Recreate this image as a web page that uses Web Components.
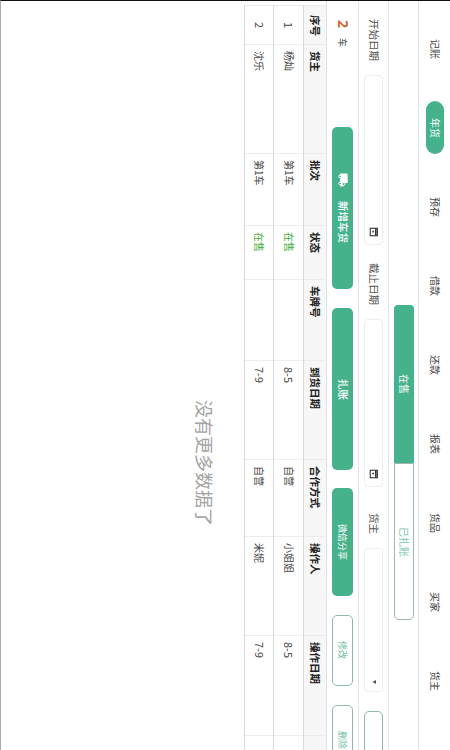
<!DOCTYPE html>
<html lang="zh-CN">
<head>
<meta charset="utf-8">
<title>年货</title>
<style>
  html { writing-mode: vertical-rl; text-orientation: sideways; background: #fff; overflow: hidden; }
  body {
    margin: 0; width: 450px; height: 750px; box-sizing: border-box; overflow: hidden; position: relative;
    border-top: 1px solid #111; border-left: 1px solid #aaa; background: #fff;
    font: 10px/1 "Noto Sans CJK SC", "Noto Sans", sans-serif; color: #333;
  }
</style>
</head>
<body>
<script>
  const def = (name, css, html) => customElements.define(name, class extends HTMLElement {
    constructor() {
      super();
      this.attachShadow({ mode: 'open' }).innerHTML = `<style>${css}</style>${html}`;
    }
  });
  const green = '#46b28c';

  def('app-tabs', `:host{display:flex;block-size:31px;border-block-end:1px solid #dfe3e6;padding-inline-start:8px;color:#444;overflow:hidden}`, `<slot></slot>`);
  def('tab-item', `
    :host{display:flex;flex:none;inline-size:79px;align-items:center;justify-content:center}
    span{display:flex;align-items:center;justify-content:center;inline-size:53px;block-size:18px;border-radius:9px}
    :host([active]) span{background:${green};color:#fff}
  `, `<span><slot></slot></span>`);

  def('seg-bar', `:host{display:flex;block-size:29px;align-items:center;padding-inline-start:304px;border-block-end:1px solid #e2e5e7}`, `<slot></slot>`);
  def('seg-item', `
    :host{display:flex;flex:none;inline-size:158px;block-size:20px;box-sizing:border-box;align-items:center;justify-content:center;
      background:${green};color:#fff;border-radius:4px 4px 0 0}
    :host([off]){background:#fff;color:#7cc4aa;border:1px solid #9db5b0;border-radius:0 0 5px 5px;inline-size:157px}
  `, `<slot></slot>`);

  def('filter-bar', `:host{display:flex;block-size:29px;align-items:center;padding-inline-start:18px;border-block-end:1px solid #e2e5e7;color:#555;font-size:10.5px;overflow:hidden}`, `<slot></slot>`);
  def('field-label', `:host{display:block;flex:none}`, `<slot></slot>`);
  def('date-field', `
    :host{display:flex;flex:none;block-size:19px;box-sizing:border-box;align-items:center;justify-content:flex-end;padding-inline-end:7px;
      border:1px solid #eee;border-radius:4px;background:#fff}
    svg{inline-size:10px;block-size:10px;display:block}
  `, `<svg viewBox="0 0 12 12"><g transform="rotate(90 6 6)" fill="none" stroke="#333" stroke-width="1.3">
      <rect x="1.5" y="2" width="9" height="8.5"/><path d="M1.5 3.8h9" stroke-width="2"/><rect x="4.5" y="6" width="2" height="2" fill="#333" stroke="none"/></g></svg>`);
  def('select-field', `
    :host{display:flex;flex:none;block-size:19px;box-sizing:border-box;align-items:center;justify-content:flex-end;padding-inline-end:5px;
      border:1px solid #eee;border-radius:4px;background:#fff}
    svg{inline-size:4px;block-size:4px;display:block}
  `, `<svg viewBox="0 0 4 4"><polygon points="0.5,2 4,0 4,4" fill="#555"/></svg>`);

  def('action-bar', `:host{display:flex;block-size:31px;align-items:center;padding-inline-start:19px;border-block-end:1px solid #dfe3e6;overflow:hidden}`, `<slot></slot>`);
  def('car-count', `
    :host{display:flex;flex:none;inline-size:107px;align-items:center;gap:10px;font-size:9px;color:#444}
    b{font:bold 14px/1 "Noto Sans","Liberation Sans",sans-serif;color:#cf6a3c}
  `, `<b><slot name="n"></slot></b><span><slot></slot></span>`);
  def('ui-button', `
    :host{display:flex;flex:none;block-size:21px;box-sizing:border-box;align-items:center;justify-content:center;gap:14px;
      background:${green};color:#fff;border-radius:5px;font-size:10.5px;font-weight:500}
    :host([small]){font-size:9px;font-weight:400}
    :host([outline]){background:#fff;color:#6dbb9f;border:1px solid #8fb8ab;font-size:9px;font-weight:400}
    :host([tall]){block-size:19px}
  `, `<slot></slot>`);
  def('truck-icon', `
    :host{display:block;flex:none;inline-size:14px;block-size:14px}
    svg{display:block;width:100%;height:100%}
  `, `<svg viewBox="0 0 24 24"><path fill="#fff" transform="rotate(90 12 12)" d="M18 18.5a1.5 1.5 0 0 1-1.5-1.5 1.5 1.5 0 0 1 1.5-1.5 1.5 1.5 0 0 1 1.5 1.5 1.5 1.5 0 0 1-1.5 1.5m1.5-9 1.96 2.5H17V9.5m-11 9A1.5 1.5 0 0 1 4.5 17 1.5 1.5 0 0 1 6 15.5 1.5 1.5 0 0 1 7.5 17 1.5 1.5 0 0 1 6 18.5M20 8h-3V4H3c-1.11 0-2 .89-2 2v11h2a3 3 0 0 0 3 3 3 3 0 0 0 3-3h6a3 3 0 0 0 3 3 3 3 0 0 0 3-3h2v-5l-3-4z"/></svg>`);

  def('data-table', `:host{display:block;padding-inline-start:4px;--cols:40px 109px 72px 54px 81px 99px 77px 99px 100px 80px;overflow:hidden}`, `<slot></slot>`);
  def('data-row', `
    :host{display:grid;grid-template-columns:var(--cols);block-size:29px;box-sizing:border-box;border-block-end:1px solid #d8d8d8;color:#444;inline-size:max-content}
    :host([head]){block-size:23px;background:#f7f7f7;color:#222;font-weight:700;font-size:10.5px}
    :host([first]){block-size:30px}
  `, `<slot></slot>`);
  def('data-cell', `
    :host{display:flex;align-items:center;padding-inline-start:6px;box-sizing:border-box;border-inline-end:1px solid #ececec;overflow:hidden;white-space:nowrap}
    :host([center]){justify-content:center;padding-inline-start:0;border-inline-start:1px solid #ececec}
    :host([ok]){color:#3cab35}
    :host([num]){font-size:11px}
  `, `<slot></slot>`);

  def('end-note', `:host{display:block;margin-block-start:30px;padding-inline-start:399px;font-size:18px;line-height:18px;color:#a3a3a3;font-weight:400;white-space:nowrap}`, `<slot></slot>`);
  def('edge-mark', `:host{position:absolute;left:-1px;top:440px;width:1px;height:6px;background:#333}`, ``);
</script>

<app-tabs>
  <tab-item>记账</tab-item><tab-item active>年货</tab-item><tab-item>预存</tab-item><tab-item>借款</tab-item><tab-item>还款</tab-item><tab-item>报表</tab-item><tab-item>货品</tab-item><tab-item>买家</tab-item><tab-item>货主</tab-item>
</app-tabs>

<seg-bar><seg-item>在售</seg-item><seg-item off>已扎账</seg-item></seg-bar>

<filter-bar>
  <field-label>开始日期</field-label>
  <date-field style="inline-size:170px;margin-inline:14px 18px"></date-field>
  <field-label>截止日期</field-label>
  <date-field style="inline-size:168px;margin-inline:14px 26px"></date-field>
  <field-label>货主</field-label>
  <select-field style="inline-size:144px;margin-inline:14px 19px;padding-inline-end:7px"></select-field>
  <ui-button outline tall style="inline-size:70px"></ui-button>
</filter-bar>

<action-bar>
  <car-count><span slot="n">2</span>车</car-count>
  <ui-button style="inline-size:162px"><truck-icon></truck-icon><span>新增车货</span></ui-button>
  <ui-button style="inline-size:162px;margin-inline-start:19px">扎账</ui-button>
  <ui-button small style="inline-size:108px;margin-inline-start:18px">微信分享</ui-button>
  <ui-button outline style="inline-size:71px;margin-inline-start:19px">修改</ui-button>
  <ui-button outline style="inline-size:71px;margin-inline-start:19px">删除</ui-button>
</action-bar>

<data-table>
  <data-row head>
    <data-cell center>序号</data-cell><data-cell>货主</data-cell><data-cell>批次</data-cell><data-cell>状态</data-cell><data-cell>车牌号</data-cell><data-cell>到货日期</data-cell><data-cell>合作方式</data-cell><data-cell>操作人</data-cell><data-cell>操作日期</data-cell><data-cell></data-cell>
  </data-row>
  <data-row first>
    <data-cell center num>1</data-cell><data-cell>杨灿</data-cell><data-cell>第1车</data-cell><data-cell ok>在售</data-cell><data-cell></data-cell><data-cell num>8-5</data-cell><data-cell>自营</data-cell><data-cell>小姐姐</data-cell><data-cell num>8-5</data-cell><data-cell></data-cell>
  </data-row>
  <data-row>
    <data-cell center num>2</data-cell><data-cell>沈乐</data-cell><data-cell>第1车</data-cell><data-cell ok>在售</data-cell><data-cell></data-cell><data-cell num>7-9</data-cell><data-cell>自营</data-cell><data-cell>米妮</data-cell><data-cell num>7-9</data-cell><data-cell></data-cell>
  </data-row>
</data-table>

<end-note>没有更多数据了</end-note>
<edge-mark></edge-mark>
</body>
</html>
